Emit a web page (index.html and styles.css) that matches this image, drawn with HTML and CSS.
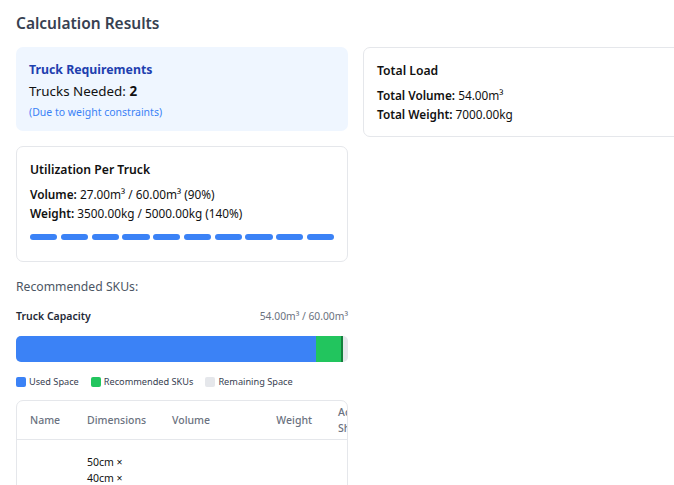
FILE: index.html
```html
<!DOCTYPE html>
<html>
<head>
<meta charset="utf-8">
<link rel="stylesheet" href="styles.css">
</head>
<body>
<div class="page">
  <h2 class="title">Calculation Results</h2>
  <div class="grid">
    <div class="col">
      <div class="card req">
        <div class="req-title">Truck Requirements</div>
        <div class="req-count">Trucks Needed: <b>2</b></div>
        <div class="req-note">(Due to weight constraints)</div>
      </div>
      <div class="card box util">
        <div class="box-title">Utilization Per Truck</div>
        <div class="line"><b>Volume:</b> 27.00m³ / 60.00m³ (90%)</div>
        <div class="line"><b>Weight:</b> 3500.00kg / 5000.00kg (140%)</div>
        <div class="dashes">
          <span></span><span></span><span></span><span></span><span></span>
          <span></span><span></span><span></span><span></span><span></span>
        </div>
      </div>
      <div class="rec">
        <div class="rec-title">Recommended SKUs:</div>
        <div class="cap-head">
          <span class="cap-label">Truck Capacity</span>
          <span class="cap-value">54.00m³ / 60.00m³</span>
        </div>
        <div class="cap-bar">
          <div class="seg used" style="width:90.4%"></div>
          <div class="seg recd" style="width:7.5%"></div>
          <div class="seg edge"></div>
        </div>
        <div class="legend">
          <span class="item"><i class="sw sw-used"></i>Used Space</span>
          <span class="item"><i class="sw sw-rec"></i>Recommended SKUs</span>
          <span class="item"><i class="sw sw-rem"></i>Remaining Space</span>
        </div>
        <div class="table-card">
          <table>
            <thead>
              <tr>
                <th class="c-name">Name</th>
                <th class="c-dim">Dimensions</th>
                <th class="c-vol">Volume</th>
                <th class="c-wt">Weight</th>
                <th class="c-act">Actual Shipping</th>
              </tr>
            </thead>
            <tbody>
              <tr>
                <td class="c-name"></td>
                <td class="c-dim">50cm ×<br>40cm ×<br>30cm</td>
                <td class="c-vol"></td>
                <td class="c-wt"></td>
                <td class="c-act"></td>
              </tr>
            </tbody>
          </table>
        </div>
      </div>
    </div>
    <div class="col">
      <div class="card box total">
        <div class="box-title">Total Load</div>
        <div class="line"><b>Total Volume:</b> 54.00m³</div>
        <div class="line"><b>Total Weight:</b> 7000.00kg</div>
      </div>
    </div>
  </div>
</div>
</body>
</html>
```

FILE: styles.css
```css
* { box-sizing: border-box; }
html, body { margin: 0; padding: 0; background: #fff; overflow: hidden; }
body {
  font-family: "Noto Sans", "Open Sans", "Liberation Sans", sans-serif;
  color: #111827;
}
.page { padding: 11px 16px 0 16px; width: 740px; }
.title {
  margin: 0 0 12px 0;
  font-size: 15.5px;
  line-height: 24px;
  font-weight: 600;
  color: #374151;
}
.grid {
  display: grid;
  grid-template-columns: 332px 332px;
  column-gap: 15px;
  align-items: start;
}
.col { display: flex; flex-direction: column; gap: 15px; }
.card { border-radius: 7px; }
.req { background: #eff6ff; padding: 13px 13px 12px 13px; height: 84px; }
.req-title { font-size: 12.3px; line-height: 20px; font-weight: 700; color: #1e40af; }
.req-count { font-size: 13.4px; line-height: 22px; color: #111; }
.req-count b { font-weight: 700; }
.req-note { font-size: 10.5px; line-height: 16px; color: #3b82f6; margin-top: 2px; }
.box { border: 1px solid #e5e7eb; background: #fff; padding: 13px 13px; }
.box-title { font-size: 12.2px; line-height: 20px; font-weight: 600; color: #111; margin-bottom: 5px; }
.line { font-size: 11.8px; line-height: 19px; color: #111; }
.line b { font-weight: 600; }
.total { height: 90px; }
.util { padding-bottom: 22px; height: 116px; }
.dashes { display: flex; gap: 3.5px; margin-top: 11px; }
.dashes span { flex: 1; height: 6px; border-radius: 3px; background: #3b82f6; }
.rec { display: flex; flex-direction: column; }
.rec-title { font-size: 12.2px; line-height: 18px; color: #4b5563; margin-top: 1px; }
.cap-head { display: flex; justify-content: space-between; align-items: center; margin-top: 12px; }
.cap-label { font-size: 10.5px; line-height: 16px; font-weight: 600; color: #1f2937; }
.cap-value { font-size: 10.3px; line-height: 16px; color: #6b7280; }
.cap-bar {
  margin-top: 12px; height: 26px; border-radius: 5px; background: #e5e7eb;
  display: flex; overflow: hidden;
}
.seg { height: 100%; }
.used { background: #3b82f6; }
.recd { background: #22c55e; }
.edge { width: 1.5px; background: #15803d; }
.legend { display: flex; gap: 12px; margin-top: 13px; font-size: 9.2px; line-height: 14px; color: #374151; }
.item { display: inline-flex; align-items: center; gap: 3px; }
.sw { display: inline-block; width: 10px; height: 10px; border-radius: 2px; }
.sw-used { background: #3b82f6; }
.sw-rec { background: #22c55e; }
.sw-rem { background: #e5e7eb; }
.table-card {
  margin-top: 11px; border: 1px solid #e5e7eb; border-radius: 7px;
  overflow: hidden; height: 120px;
}
table { border-collapse: collapse; font-size: 10.5px; table-layout: fixed; width: 378px; }
th {
  font-weight: 500; color: #6b7280; text-align: left;
  padding: 0 13px; height: 38px; border-bottom: 1px solid #e5e7eb;
  line-height: 16px; vertical-align: middle;
}
td { padding: 11px 13px; color: #111; line-height: 16px; vertical-align: top; }
.c-name { width: 57px; }
.c-dim { width: 85px; }
.c-vol { width: 90px; }
.c-wt { width: 76px; text-align: right; }
.c-act { width: 70px; }
td.c-dim { padding-top: 14px; }
```
